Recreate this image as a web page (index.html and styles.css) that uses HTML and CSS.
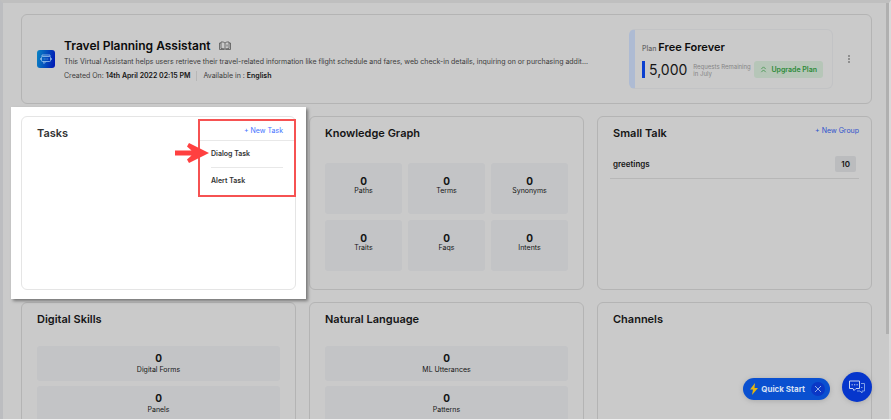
FILE: index.html
```html
<!DOCTYPE html>
<html lang="en">
<head>
<meta charset="utf-8">
<title>Travel Planning Assistant</title>
<link rel="stylesheet" href="styles.css">
</head>
<body>
<main class="page">
  <header class="card summary">
    <div class="bot-icon">
      <svg viewBox="0 0 18 18" width="18" height="18" fill="none" stroke="#9cc4ee" stroke-width=".8">
        <path d="M5 6.500V5h8v1.500"/>
        <rect x="4.500" y="6.500" width="9" height="5" rx="1"/>
        <path d="m6.500 11.500.5 2 2-2M6.800 9h.8M8.600 9h.8M10.400 9h.8M3.700 8v2M14.300 8v2"/>
      </svg>
    </div>
    <div class="intro">
      <h1 class="title">Travel Planning Assistant
        <svg class="book" viewBox="0 0 12 10" width="12" height="10" fill="none" stroke="#555" stroke-width=".8">
          <path d="M6 2C5 1 3.500.8 2 1v6.500c1.500-.2 3 0 4 1 1-1 2.500-1.200 4-1V1C8.500.8 7 1 6 2zM6 2v6.500M2 2H.5v6.500H5M10 2h1.500v6.500H7"/>
          <path d="M8 3.500v2"/>
        </svg>
      </h1>
      <p class="description">This Virtual Assistant helps users retrieve their travel-related information like flight schedule and fares, web check-in details, inquiring on or purchasing addit...</p>
      <p class="meta"><span>Created On: <b>14th April 2022 02:15 PM</b></span><span class="available">Available in : <b>English</b></span></p>
    </div>
    <section class="plan">
      <p class="plan-name">Plan <strong>Free Forever</strong></p>
      <div class="plan-row">
        <span class="quota">5,000</span>
        <span class="quota-note">Requests Remaining<br>in July</span>
        <button class="upgrade" type="button">
          <svg viewBox="0 0 8 8" width="7" height="7" fill="none" stroke="#2c8a38" stroke-width=".8"><path d="M1.500 3.500 4 1l2.500 2.500M1.500 7 4 4.500 6.500 7"/></svg>
          Upgrade Plan
        </button>
      </div>
    </section>
    <button class="more" type="button" aria-label="More options">
      <svg viewBox="0 0 4 10" width="4" height="10" fill="#444"><circle cx="2" cy="2" r=".8"/><circle cx="2" cy="5" r=".8"/><circle cx="2" cy="8" r=".8"/></svg>
    </button>
  </header>

  <div class="grid">
    <section class="card panel tasks">
      <h2>Tasks</h2>
      <div class="task-menu">
        <button class="link" type="button">+ New Task</button>
        <ul>
          <li><a href="#dialog">Dialog Task</a></li>
          <li><a href="#alert">Alert Task</a></li>
        </ul>
        <svg class="arrow" viewBox="0 0 36 22" width="36" height="22" fill="#ff4040"><path d="M1 8.500h16.500L13 4.500 15 1l20 10-20 10-2-3.500 4.500-4H1z"/></svg>
      </div>
    </section>

    <section class="card panel">
      <h2>Knowledge Graph</h2>
      <div class="stats three">
        <div class="stat"><b>0</b><span>Paths</span></div>
        <div class="stat"><b>0</b><span>Terms</span></div>
        <div class="stat"><b>0</b><span>Synonyms</span></div>
        <div class="stat"><b>0</b><span>Traits</span></div>
        <div class="stat"><b>0</b><span>Faqs</span></div>
        <div class="stat"><b>0</b><span>Intents</span></div>
      </div>
    </section>

    <section class="card panel">
      <div class="panel-head">
        <h2>Small Talk</h2>
        <button class="link" type="button">+ New Group</button>
      </div>
      <div class="talk-row"><span>greetings</span><span class="count">10</span></div>
    </section>

    <section class="card panel">
      <h2>Digital Skills</h2>
      <div class="stats wide">
        <div class="stat"><b>0</b><span>Digital Forms</span></div>
        <div class="stat"><b>0</b><span>Panels</span></div>
      </div>
    </section>

    <section class="card panel">
      <h2>Natural Language</h2>
      <div class="stats wide">
        <div class="stat"><b>0</b><span>ML Utterances</span></div>
        <div class="stat"><b>0</b><span>Patterns</span></div>
      </div>
    </section>

    <section class="card panel">
      <h2>Channels</h2>
    </section>
  </div>
</main>

<div class="scroll-thumb"></div>

<div class="floating">
  <div class="quick">
    <svg viewBox="0 0 8 12" width="8" height="12" fill="#e5b611"><path d="M5 0 0 6.500h3L2 12l6-7H4.500z"/></svg>
    <button class="quick-label" type="button">Quick Start</button>
    <button class="close" type="button" aria-label="Close">
      <svg viewBox="0 0 8 8" width="8" height="8" fill="none" stroke="#b9cdf2" stroke-width=".8"><path d="m1 1 6 6M7 1 1 7"/></svg>
    </button>
  </div>
  <button class="chat" type="button" aria-label="Open chat">
    <svg viewBox="0 0 18 16" width="18" height="16" fill="none" stroke="#c5d2f3" stroke-width="1">
      <path d="M1.500 2h10v7.500H8L6 11.500l-1-2H1.500z"/>
      <path d="M3.500 5.800h1.300M6 5.800h1.300M8.500 5.800h1.300"/>
      <path stroke="#7f9fe6" d="M13 4.500h3.500V12H14v2l-2-2H9M13 8.500h1.500"/>
    </svg>
  </button>
</div>
</body>
</html>
```

FILE: styles.css
```css
* {
  box-sizing: border-box;
}

body {
  margin: 0;
  height: 100vh;
  overflow: hidden;
  background: #cacaca;
  color: #151515;
  font-family: Inter, sans-serif;
  font-size: 7px;
  line-height: 10px;
  border-bottom: 1px solid #f2f2f2;
}

h1, h2, p, ul {
  margin: 0;
  padding: 0;
}

button {
  padding: 0;
  border: 0;
  background: none;
  color: inherit;
  font: inherit;
}

a {
  color: inherit;
  text-decoration: none;
}

svg {
  display: block;
}

.page {
  height: 100%;
  overflow: hidden;
  padding: 11px 17px 0 18px;
  border: solid #bcbdc0;
  border-width: 3px 0 0 3px;
  border-top-color: #bfbfbf;
  border-right: 2px solid #d9d9d9;
}

.card {
  border: 1px solid #b4b4b4;
  border-radius: 6px;
}

.summary {
  display: flex;
  align-items: center;
  height: 90px;
  padding: 0 20px 0 15px;
}

.bot-icon {
  flex: none;
  margin-right: 9px;
  border-radius: 3px;
  background: linear-gradient(100deg, #0a86c4, #0014b4);
}

.intro {
  flex: 1;
  min-width: 0;
  padding-top: 1px;
  color: #3c3c3c;
}

.title {
  display: flex;
  align-items: center;
  gap: 9px;
  margin-bottom: 3px;
  color: #0c0c0c;
  font-size: 12px;
  font-weight: 600;
  line-height: 16px;
}

.description {
  overflow: hidden;
  margin-bottom: 4px;
  text-overflow: ellipsis;
  white-space: nowrap;
}

.meta {
  display: flex;
}

.meta b {
  color: #151515;
  font-weight: 600;
}

.available {
  margin-left: 6px;
  padding-left: 6px;
  border-left: 1px solid #b7b7b7;
}

.plan {
  flex: none;
  width: 204px;
  height: 60px;
  padding: 10px 9px 0 7px;
  border: 1px solid #c2c3c5;
  border-left: 6px solid #aebbd3;
  border-radius: 6px;
}

.plan-name {
  margin-bottom: 5px;
  color: #666;
  font-weight: 500;
  line-height: 14px;
}

.plan-name strong {
  color: #0c0c0c;
  font-size: 11px;
  font-weight: 600;
}

.plan-row {
  display: flex;
  align-items: center;
}

.quota {
  padding-left: 4px;
  border-left: 3px solid #0b3fd0;
  font-size: 14px;
  line-height: 17px;
}

.quota-note {
  margin-left: 6px;
  color: #858585;
  font-size: 6px;
  line-height: 7px;
  white-space: nowrap;
}

.upgrade {
  display: flex;
  align-items: center;
  gap: 4px;
  height: 17px;
  margin-left: auto;
  padding: 0 6px;
  border-radius: 3px;
  background: #b6c6b8;
  color: #2c8a38;
  font-weight: 600;
  white-space: nowrap;
}

.more {
  margin-left: 14px;
}

.grid {
  display: grid;
  grid-template-columns: repeat(3, minmax(0, 1fr));
  grid-auto-rows: 174px;
  gap: 12px 13px;
  margin-top: 12px;
}

.panel {
  padding: 9px 15px;
}

h2 {
  font-size: 11px;
  font-weight: 600;
  line-height: 14px;
}

.link {
  color: #2f52cc;
}

.tasks {
  position: relative;
  z-index: 1;
  border-color: transparent;
  color: #333;
}

.tasks::before,
.tasks::after {
  content: "";
  position: absolute;
  z-index: -1;
}

.tasks::before {
  inset: -10px -11px;
  background: #fff;
  box-shadow: 2px 2px 3px #777;
}

.tasks::after {
  inset: -1px;
  border: 1px solid #e5e5e5;
  border-radius: 6px;
}

.task-menu {
  position: absolute;
  top: 2px;
  right: -1px;
  width: 98px;
  height: 78px;
  border: 2px solid #f65252;
  text-align: right;
}

.task-menu .link {
  display: block;
  width: 100%;
  padding: 5px 11px 4px 0;
  border-bottom: 1px solid #e8e8e8;
  color: #4474ff;
  text-align: right;
}

.task-menu ul {
  padding: 0 11px;
  list-style: none;
  text-align: left;
}

.task-menu li {
  padding: 8px 0;
  border-bottom: 1px solid #e8e8e8;
  font-weight: 600;
}

.task-menu li:last-child {
  border-bottom: 0;
}

.arrow {
  position: absolute;
  top: 21px;
  left: -26px;
}

.panel-head {
  display: flex;
  align-items: flex-start;
  justify-content: space-between;
  margin-right: -3px;
}

.talk-row {
  display: flex;
  align-items: center;
  justify-content: space-between;
  margin: 16px -3px 0;
  padding: 0 3px 6px;
  border-bottom: 1px solid #b7b7b7;
  font-size: 8px;
  font-weight: 600;
}

.count {
  padding: 3px 6px;
  border-radius: 2px;
  background: #bbbcbe;
}

.stats {
  display: grid;
  gap: 6px;
}

.three {
  grid-template-columns: repeat(3, 1fr);
  margin-top: 23px;
}

.wide {
  gap: 5px;
  margin-top: 20px;
}

.stat {
  display: flex;
  flex-direction: column;
  align-items: center;
  justify-content: center;
  height: 51px;
  padding-bottom: 6px;
  border-radius: 3px;
  background: #c3c4c6;
}

.stat b {
  font-size: 10px;
  font-weight: 700;
}

.wide .stat {
  gap: 2px;
  height: 35px;
  padding-bottom: 0;
}

.scroll-thumb {
  position: absolute;
  top: 3px;
  right: 2px;
  width: 3px;
  height: 331px;
  background: #b0b0b0;
}

.floating {
  position: absolute;
  right: 19px;
  bottom: 18px;
  z-index: 2;
  display: flex;
  align-items: center;
  gap: 12px;
}

.quick {
  display: flex;
  align-items: center;
  height: 22px;
  margin-top: 4px;
  padding: 0 5px 0 7px;
  border-radius: 11px;
  background: #0a50d0;
  box-shadow: 0 1px 5px #aaa;
  color: #d5e0f5;
}

.quick-label {
  margin: 0 6px 0 3px;
  font-size: 8px;
  font-weight: 700;
}

.close {
  display: grid;
  place-items: center;
  width: 14px;
  height: 14px;
  border-radius: 50%;
  background: #0a37c6;
}

.chat {
  display: grid;
  place-items: center;
  width: 30px;
  height: 30px;
  border-radius: 50%;
  background: #0636cc;
  box-shadow: 0 1px 5px #aaa;
}
```
